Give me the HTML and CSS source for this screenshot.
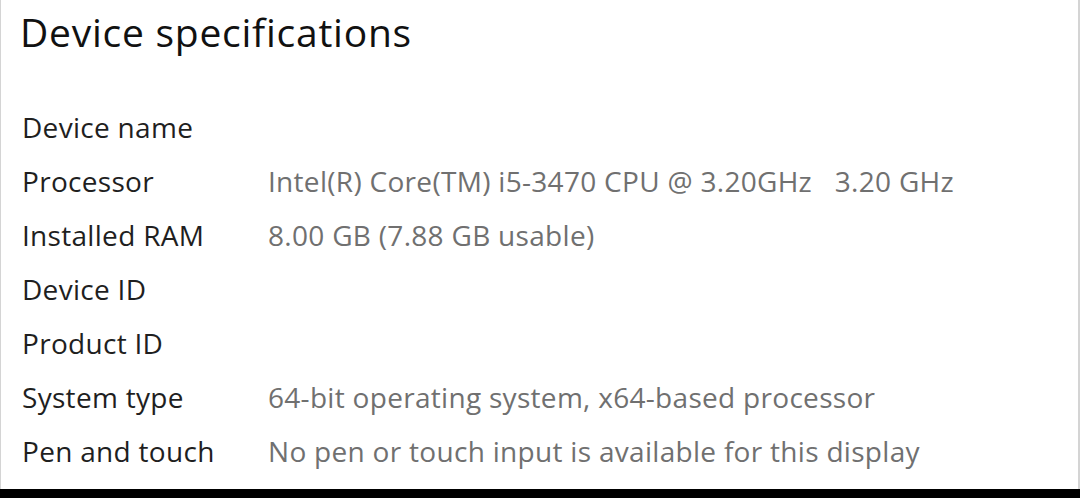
FILE: index.html
```html
<!DOCTYPE html>
<html lang="en">
<head>
    <meta charset="UTF-8">
    <meta name="viewport" content="width=device-width, initial-scale=1.0">
    <title>Device specifications</title>
    <link rel="stylesheet" href="styles.css">
</head>
<body>
    <div class="panel">
        <h1 class="title">Device specifications</h1>
        <div class="specs">
            <div class="label">Device name</div>
            <div class="value"></div>
            <div class="label">Processor</div>
            <div class="value">Intel(R) Core(TM) i5-3470 CPU @ 3.20GHz&nbsp;&nbsp;&nbsp;3.20 GHz</div>
            <div class="label">Installed RAM</div>
            <div class="value">8.00 GB (7.88 GB usable)</div>
            <div class="label">Device ID</div>
            <div class="value"></div>
            <div class="label">Product ID</div>
            <div class="value"></div>
            <div class="label">System type</div>
            <div class="value">64-bit operating system, x64-based processor</div>
            <div class="label">Pen and touch</div>
            <div class="value">No pen or touch input is available for this display</div>
        </div>
    </div>
    <div class="bottom-bar"></div>
</body>
</html>
```

FILE: styles.css
```css
/* General */
html, body {
    margin: 0;
    padding: 0;
    height: 100%;
}

body {
    display: flex;
    flex-direction: column;
    background-color: #000;
    font-family: 'Open Sans', 'Noto Sans', sans-serif;
}

.panel {
    flex: 1;
    background-color: #fff;
    border-left: 1px solid #d4d4d4;
    border-right: 2px solid #d4d4d4;
    padding: 8px 0 0 19px;
}

/* Title */
.title {
    margin: 0;
    font-size: 39px;
    font-weight: 400;
    letter-spacing: 0.75px;
    line-height: 48px;
    color: #111;
}

/* Spec rows */
.specs {
    display: grid;
    grid-template-columns: 248px 1fr;
    margin-top: 44px;
    font-size: 28px;
    letter-spacing: 0.3px;
    line-height: 54px;
}

.label {
    padding-left: 2px;
    color: #1f1f1f;
}

.value {
    color: #707070;
}

.bottom-bar {
    height: 9px;
    background-color: #000;
}
```
